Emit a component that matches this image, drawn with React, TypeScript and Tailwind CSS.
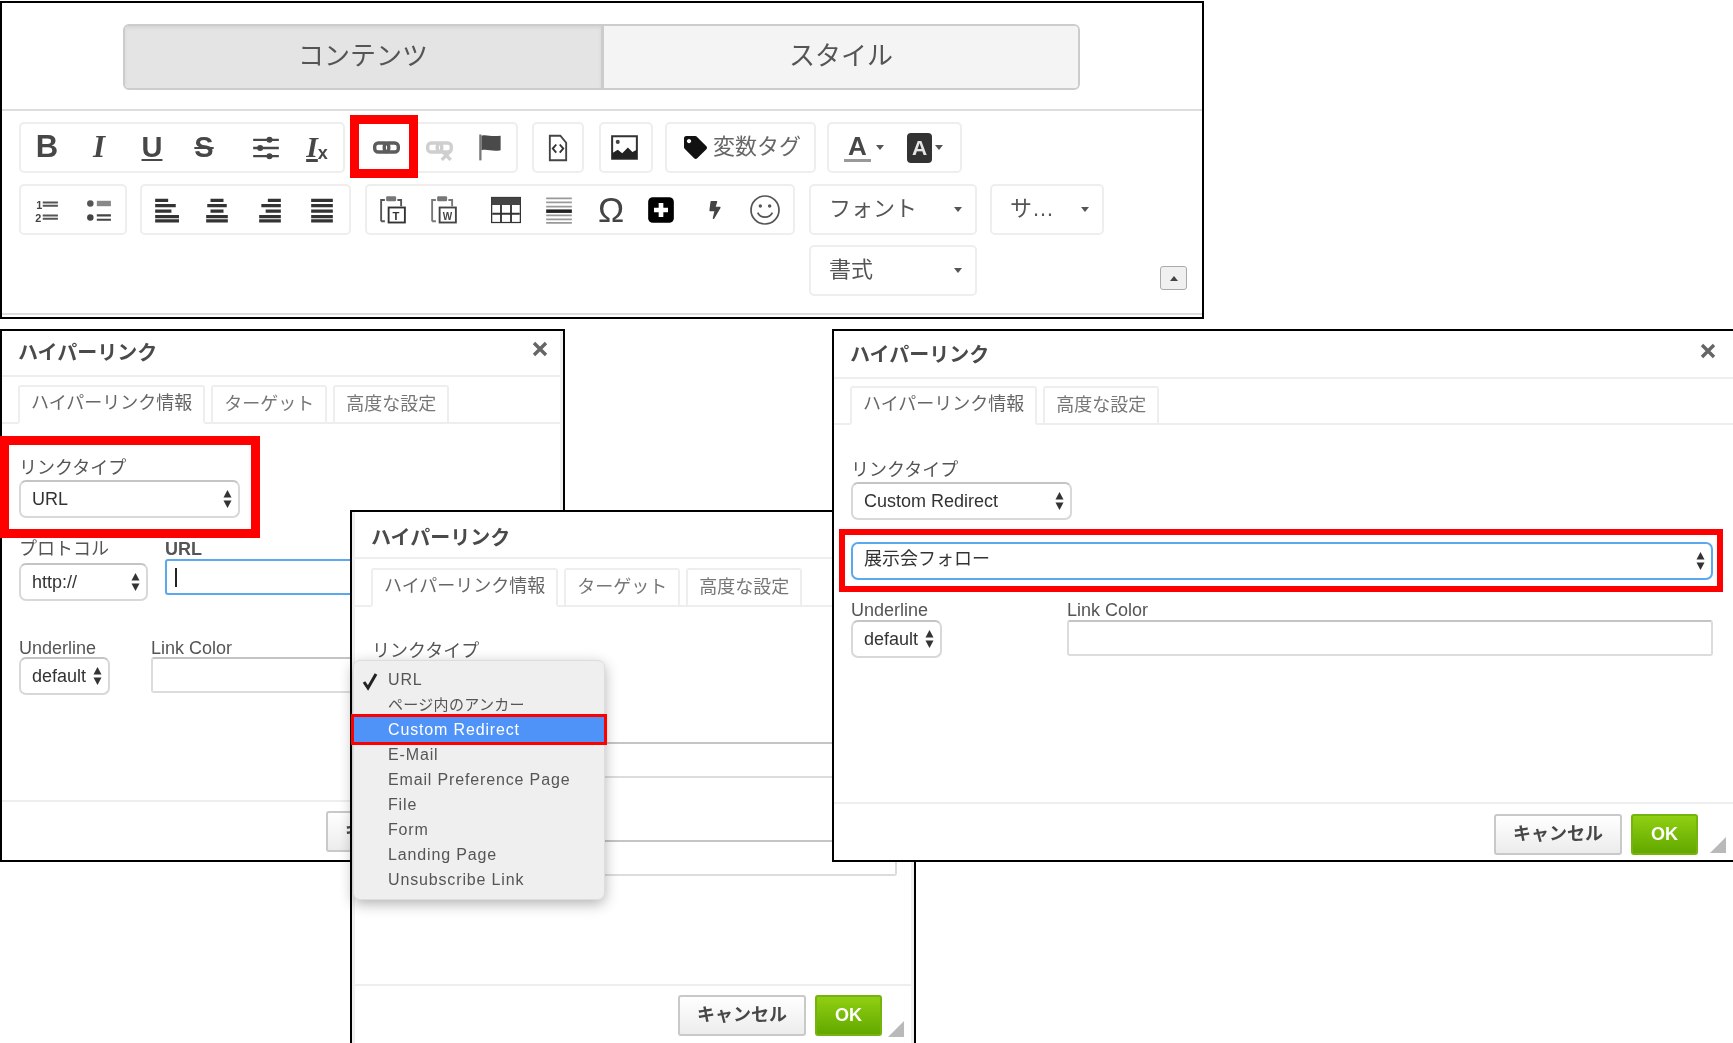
import React from "react";
import { FaTag, FaBolt } from "react-icons/fa";

const Svg = ({ w = 26, h = 26, vb = "0 0 24 24", children }: { w?: number; h?: number; vb?: string; children: React.ReactNode }) => (
  <svg width={w} height={h} viewBox={vb} className="shrink-0">{children}</svg>
);

const Caret = ({ c = "#555" }: { c?: string }) => (
  <svg width="8" height="5" viewBox="0 0 8 5" className="shrink-0"><path d="M0 0h8L4 5z" fill={c} /></svg>
);

const Arrows = () => (
  <svg width="9" height="20" viewBox="0 0 9 20" className="shrink-0">
    <path d="M4.5 1L8.5 8.5H.5z" fill="#333" />
    <path d="M4.5 19L8.5 11.5H.5z" fill="#333" />
  </svg>
);

const Slot = ({ className, children }: { className: string; children: React.ReactNode }) => (
  <div className={`flex items-center justify-center shrink-0 ${className}`}>{children}</div>
);

const Group = ({ className, children }: { className: string; children: React.ReactNode }) => (
  <div className={`flex items-center h-[51px] shrink-0 rounded-[5px] border-2 border-[#eeeeee] bg-white ${className}`}>{children}</div>
);

const Combo = ({ className, label }: { className: string; label: string }) => (
  <div className={`flex items-center justify-between h-[51px] shrink-0 rounded-[5px] border-2 border-[#eeeeee] bg-white pl-[18px] pr-[13px] text-[22px] text-[#555555] ${className}`}>
    <span className="pb-[2px]">{label}</span>
    <Caret />
  </div>
);

const LinkIcon = ({ c }: { c: string }) => (
  <>
    <rect x="1.5" y="8" width="12.5" height="8" rx="3.2" fill="none" stroke={c} strokeWidth="3" />
    <rect x="10" y="8" width="12.5" height="8" rx="3.2" fill="none" stroke={c} strokeWidth="3" />
  </>
);

const Toolbar = () => (
  <div className="absolute left-0 top-[1px] w-[1204px] h-[318px] border-x-[2px] border-y-[2px] border-black bg-white">
    <div className="h-[312px] border-b-2 border-[#dddddd] flex flex-col">
      <div className="ml-[121px] mt-[21px] w-[957px] h-[66px] flex shrink-0 rounded-[6px] border-2 border-[#cccccc] text-[26px] text-[#555555] overflow-hidden">
        <div className="w-[479px] flex items-center justify-center bg-[#e4e4e4] border-r-[3px] border-[#cccccc] shadow-[inset_0_2px_3px_#d5d5d5] pb-[2px]">コンテンツ</div>
        <div className="flex-1 flex items-center justify-center bg-[#f4f4f4] pb-[2px]">スタイル</div>
      </div>
      <div className="mt-[19px] h-[2px] shrink-0 bg-[#dddddd]" />

      <div className="mt-[11px] flex">
        <Group className="ml-[17px] w-[326px]">
          <Slot className="w-[52px] text-[31px] font-bold text-[#474747]">B</Slot>
          <Slot className="w-[52px] text-[31px] font-bold italic text-[#474747] font-['Liberation_Serif',serif]">I</Slot>
          <Slot className="w-[54px] text-[29px] font-bold text-[#474747] underline underline-offset-2">U</Slot>
          <Slot className="w-[50px] text-[29px] font-bold text-[#474747] line-through">S</Slot>
          <Slot className="w-[74px]">
            <Svg w={28} h={28}>
              <g stroke="#474747" strokeWidth="2" fill="#333">
                <path d="M1 5h22M1 12h22M1 19h22" />
                <circle cx="15" cy="5" r="1.6" />
                <circle cx="7" cy="12" r="1.6" />
                <circle cx="15" cy="19" r="1.6" />
              </g>
            </Svg>
          </Slot>
          <Slot className="w-[28px] text-[30px] font-bold italic text-[#474747] font-['Liberation_Serif',serif] pb-[2px]">
            <span className="underline underline-offset-2">I</span>
            <span className="text-[18px] not-italic font-['Liberation_Sans',sans-serif] mt-[14px]">x</span>
          </Slot>
        </Group>
        <Group className="ml-[7px] w-[166px]">
          <Slot className="w-[64px]"><Svg w={27} h={27}><LinkIcon c="#5c5c5c" /></Svg></Slot>
          <Slot className="w-[42px]">
            <Svg w={27} h={27}>
              <LinkIcon c="#cfcfcf" />
              <path d="M14 15l8 8M22 15l-8 8" stroke="#cfcfcf" strokeWidth="3" />
            </Svg>
          </Slot>
          <Slot className="w-[60px]">
            <Svg w={27} h={30}>
              <rect x="2" y="0" width="2" height="23" fill="#777777" />
              <path d="M4 1c5-1.500 8 1.500 17 0v13c-8 1.500-12-1.500-17 0z" fill="#4a4a4a" />
            </Svg>
          </Slot>
        </Group>
        <Group className="ml-[14px] w-[52px] justify-center">
          <Svg w={28} h={34}>
            <path d="M5 1.500h9l5 6v15H5z" fill="none" stroke="#444444" strokeWidth="1.600" />
            <path d="M10.500 9L7.500 12.500l3 3.500M13.500 9l3 3.500-3 3.500" fill="none" stroke="#333333" strokeWidth="1.600" />
          </Svg>
        </Group>
        <Group className="ml-[15px] w-[54px] justify-center pr-[3px]">
          <Svg w={27} h={27}>
            <rect x="1" y="2" width="22" height="20" fill="#ffffff" stroke="#333333" strokeWidth="1.800" />
            <circle cx="6" cy="7" r="1.800" fill="#444444" />
            <path d="M1 22v-5l5-3 4 3 5-5 4 4 4-2v8z" fill="#222222" />
          </Svg>
        </Group>
        <Group className="ml-[12px] w-[151px] pl-[17px] text-[22px] text-[#666666] gap-[6px]">
          <span className="text-[#111111] text-[23px] shrink-0"><FaTag /></span>
          <span className="whitespace-nowrap pb-[2px]">変数タグ</span>
        </Group>
        <Group className="ml-[11px] w-[135px]">
          <div className="ml-[15px] flex items-end gap-[5px]">
            <span className="flex flex-col items-center w-[27px]">
              <span className="text-[26px] leading-[24px] font-bold text-[#474747]">A</span>
              <span className="mt-[1px] w-[27px] h-[3px] bg-[#999999]" />
            </span>
            <span className="mb-[12px]"><Caret /></span>
          </div>
          <div className="ml-[23px] flex items-center gap-[3px]">
            <span className="flex items-center justify-center w-[25px] h-[30px] rounded-[4px] bg-[#333333] text-[21px] font-bold text-[#e5e5e5]">A</span>
            <Caret />
          </div>
        </Group>
      </div>

      <div className="mt-[11px] flex">
        <Group className="ml-[17px] w-[108px]">
          <Slot className="w-[50px]">
            <Svg w={26} h={26}>
              <text x="3" y="11" fontSize="10" fill="#444444" fontWeight="bold">1</text>
              <text x="2" y="23" fontSize="10" fill="#444444" fontWeight="bold">2</text>
              <path d="M9 5h14M9 8h14M9 17h14M9 20h14" stroke="#555555" strokeWidth="1.800" />
            </Svg>
          </Slot>
          <Slot className="w-[56px]">
            <Svg w={26} h={26}>
              <circle cx="4" cy="6" r="3" fill="#555555" />
              <circle cx="4" cy="19" r="3" fill="#444444" />
              <path d="M10 6h13" stroke="#888888" strokeWidth="5" />
              <path d="M10 17h13M10 21h13" stroke="#444444" strokeWidth="2" />
            </Svg>
          </Slot>
        </Group>
        <Group className="ml-[13px] w-[211px]">
          {[
            ["w-[48px]", "M2 3h12M2 8h19M2 13h15M2 18h22M2 22h22"],
            ["w-[54px]", "M6 3h12M3 8h18M6 13h12M2 18h20M2 22h20"],
            ["w-[52px]", "M10 3h12M4 8h18M8 13h14M2 18h20M2 22h20"],
            ["w-[52px]", "M2 3h20M2 8h20M2 13h20M2 18h20M2 22h20"],
          ].map(([w, d]) => (
            <Slot key={d} className={w}>
              <Svg w={26} h={26}><path d={d} stroke="#333333" strokeWidth="3" /></Svg>
            </Slot>
          ))}
        </Group>
        <Group className="ml-[14px] w-[430px]">
          <Slot className="w-[52px]">
            <Svg w={30} h={34} vb="1.500 1 24 24">
              <path d="M4 22V5h3M17 5h3v5M4 22h3" fill="none" stroke="#555555" strokeWidth="1.500" />
              <rect x="8" y="2" width="8" height="4" rx="1" fill="#777777" />
              <rect x="10" y="11" width="13" height="12" fill="#ffffff" stroke="#333333" strokeWidth="1.500" />
              <text x="13" y="21" fontSize="9" fontWeight="bold" fill="#333333">T</text>
            </Svg>
          </Slot>
          <Slot className="w-[50px]">
            <Svg w={30} h={34} vb="1.500 1 24 24">
              <path d="M4 22V5h3M17 5h3v5M4 22h3" fill="none" stroke="#777777" strokeWidth="1.500" />
              <rect x="8" y="2" width="8" height="4" rx="1" fill="#777777" />
              <rect x="10" y="11" width="13" height="12" fill="#ffffff" stroke="#444444" strokeWidth="1.500" />
              <text x="12.500" y="21" fontSize="8" fontWeight="bold" fill="#444444">W</text>
            </Svg>
          </Slot>
          <Slot className="w-[74px]">
            <Svg w={30} h={30}>
              <rect x="0.500" y="2" width="23" height="20" fill="#ffffff" stroke="#333333" strokeWidth="1" />
              <rect x="0.500" y="2" width="23" height="6" fill="#444444" />
              <path d="M8 8v14M16 8v14M1 15h22" stroke="#333333" strokeWidth="1.500" />
            </Svg>
          </Slot>
          <Slot className="w-[32px]">
            <Svg w={28} h={30}>
              <path d="M1 2h22M1 5.500h22M1 9h22M1 16.500h22M1 20h22M1 23h22" stroke="#999999" strokeWidth="1.500" />
              <path d="M1 13h22" stroke="#222222" strokeWidth="3" />
            </Svg>
          </Slot>
          <Slot className="w-[72px] text-[35px] text-[#444444] leading-none">Ω</Slot>
          <Slot className="w-[28px]">
            <Svg w={28} h={28}>
              <rect x="1" y="1" width="22" height="22" rx="4" fill="#000000" />
              <path d="M12 6v12M6 12h12" stroke="#ffffff" strokeWidth="4" />
            </Svg>
          </Slot>
          <Slot className="w-[80px] text-[18px] text-[#444444]"><FaBolt /></Slot>
          <Slot className="w-[20px]">
            <Svg w={32} h={32}>
              <circle cx="12" cy="12" r="10.500" fill="none" stroke="#555555" strokeWidth="1.300" />
              <circle cx="8.500" cy="9" r="1.300" fill="#555555" />
              <circle cx="15.500" cy="9" r="1.300" fill="#555555" />
              <path d="M6.500 14c2 4.500 9 4.500 11 0" fill="none" stroke="#555555" strokeWidth="1.300" />
            </Svg>
          </Slot>
        </Group>
        <Combo className="ml-[14px] w-[168px]" label="フォント" />
        <Combo className="ml-[13px] w-[114px]" label="サ…" />
      </div>

      <div className="mt-[10px] flex items-start">
        <Combo className="ml-[807px] w-[168px]" label="書式" />
        <div className="ml-[183px] mt-[21px] flex items-center justify-center w-[27px] h-[24px] rounded-[3px] border border-[#aaaaaa] bg-[#f0f0f0]">
          <svg width="8" height="5" viewBox="0 0 8 5"><path d="M4 0l4 5H0z" fill="#444444" /></svg>
        </div>
      </div>
    </div>
    <div className="absolute left-[348px] top-[112px] w-[68px] h-[63px] border-[9px] border-[#ff0000]" />
  </div>
);

const Select = ({ className, value }: { className: string; value: string }) => (
  <div className={`flex items-center justify-between h-[38px] shrink-0 rounded-[7px] border-2 border-[#d8d8d8] border-t-[#c4c4c4] bg-white pl-[11px] pr-[6px] text-[18px] text-[#333333] ${className}`}>
    <span className="whitespace-nowrap">{value}</span>
    <Arrows />
  </div>
);

const Input = ({ focus, className = "" }: { focus?: boolean; className?: string }) => (
  <div className={`h-[36px] rounded-[3px] bg-white ${focus ? "border-2 border-[#5aa9ee] flex items-center pl-[8px]" : "border-2 border-[#dcdcdc] border-t-[#c4c4c4]"} ${className}`}>
    {focus && <span className="w-[2px] h-[19px] bg-[#222222]" />}
  </div>
);

const Label = ({ className = "", children }: { className?: string; children?: React.ReactNode }) => (
  <div className={`h-[20px] leading-[20px] text-[18px] text-[#555555] whitespace-nowrap ${className}`}>{children}</div>
);

const Dialog = ({ className, innerClass = "", headerClass, tabsClass, footerClass, tabs, children, overlay, okText = true }: {
  className: string; innerClass?: string; headerClass: string; tabsClass: string; footerClass: string; tabs: string[]; children: React.ReactNode; overlay?: React.ReactNode; okText?: boolean;
}) => (
  <div className={`absolute border-2 border-black bg-white ${className}`}>
    <div className={`h-full flex flex-col border-[#f0f0f0] ${innerClass}`}>
      <div className={`shrink-0 flex items-center pl-[16px] border-b-2 border-[#eeeeee] ${headerClass}`}>
        <span className="text-[20px] font-bold text-[#4a4a4a]">ハイパーリンク</span>
      </div>
      <div className={`shrink-0 h-[39px] pl-[16px] flex gap-[6px] border-b-2 border-[#eeeeee] ${tabsClass}`}>
        {tabs.map((t, i) => (
          <div key={t} className={`px-[11px] pb-[2px] h-[39px] flex items-center justify-center whitespace-nowrap rounded-t-[3px] border-x-2 border-t-2 border-[#eeeeee] text-[18px] ${i === 0 ? "bg-white text-[#666666] border-b-2 border-b-white" : "text-[#777777]"}`}>{t}</div>
        ))}
      </div>
      <div className="flex-1 min-h-0 pl-[17px] pr-[17px]">{children}</div>
      <div className={`relative shrink-0 flex justify-end items-start gap-[9px] border-t-2 border-[#eeeeee] ${footerClass}`}>
        <div className="w-[128px] h-[41px] flex items-center justify-center rounded-[3px] border-2 border-[#c9c9c9] bg-gradient-to-b from-white to-[#ececec] text-[18px] font-bold text-[#474747]">キャンセル</div>
        <div className="w-[67px] h-[41px] flex items-center justify-center rounded-[3px] border-2 border-[#76b30f] bg-gradient-to-b from-[#90cf12] to-[#62a800] text-[18px] font-bold text-white">{okText ? "OK" : ""}</div>
        <svg width="16" height="16" viewBox="0 0 16 16" className="absolute right-[7px] bottom-[7px]"><path d="M16 0v16H0z" fill="#b9b9b9" /></svg>
      </div>
    </div>
    {overlay}
  </div>
);

const Close = ({ className }: { className: string }) => (
  <svg width="16" height="16" viewBox="0 0 16 16" className={`absolute ${className}`}>
    <path d="M2 2l12 12M14 2L2 14" stroke="#666666" strokeWidth="3.400" />
  </svg>
);

const UrlBody = ({ focus, covered }: { focus?: boolean; covered?: boolean }) => (
  <div className="pt-[34px]">
    <Label className="mb-[2px]">リンクタイプ</Label>
    <Select className="w-[221px]" value={covered ? "" : "URL"} />
    <div className="mt-[21px] flex gap-[17px]">
      <div className="shrink-0">
        <Label className="mb-[4px]">{covered ? "" : "プロトコル"}</Label>
        <Select className="w-[129px]" value={covered ? "" : "http://"} />
      </div>
      <div className="flex-1">
        <Label className="font-bold">{covered ? "" : "URL"}</Label>
        <Input focus={focus} />
      </div>
    </div>
    <div className="mt-[37px] flex gap-[41px]">
      <div className="shrink-0">
        <Label className="mb-[-1px]">{covered ? "" : "Underline"}</Label>
        <Select className="w-[91px]" value={covered ? "" : "default"} />
      </div>
      <div className="flex-1">
        <Label className="mb-[-1px]">{covered ? "" : "Link Color"}</Label>
        <Input />
      </div>
    </div>
  </div>
);

const MENU = ["URL", "ページ内のアンカー", "Custom Redirect", "E-Mail", "Email Preference Page", "File", "Form", "Landing Page", "Unsubscribe Link"];

const Menu = () => (
  <div className="absolute left-[1px] top-[148px] w-[252px] h-[240px] pt-[6px] rounded-[7px] bg-[#efefef] border border-[#dddddd] shadow-[0_4px_14px_rgba(0,0,0,0.3)]">
    {MENU.map((m, i) => (
      <div key={m} className={`relative h-[25px] leading-[25px] pl-[34px] whitespace-nowrap ${i === 1 ? "text-[15px] tracking-[0.3px]" : "text-[16px] tracking-[0.85px]"} ${i === 2 ? "bg-[#4f93f8] text-white outline-[3px] outline-solid outline-[#ff0000]" : "text-[#555555]"}`}>
        {i === 0 && (
          <svg width="16" height="19" viewBox="0 0 16 19" className="absolute left-[8px] top-[5px]">
            <path d="M2 10l4 6L14 2" fill="none" stroke="#222222" strokeWidth="3" />
          </svg>
        )}
        {m}
      </div>
    ))}
  </div>
);

export default function App() {
  return (
    <div className="relative w-[1733px] h-[1043px] overflow-hidden bg-white blur-[0.5px] font-['Liberation_Sans','Noto_Sans_CJK_JP',sans-serif]">
      <Toolbar />

      <Dialog
        className="left-0 top-[329px] w-[565px] h-[533px]"
        innerClass="border-r-[3px]"
        headerClass="h-[46px]"
        tabsClass="mt-[8px]"
        footerClass="h-[60px] pt-[9px] pr-[30px]"
        tabs={["ハイパーリンク情報", "ターゲット", "高度な設定"]}
        okText={false}
        overlay={
          <>
            <Close className="left-[530px] top-[10px]" />
            <div className="absolute left-[-2px] top-[105px] w-[260px] h-[102px] border-[9px] border-[#ff0000]" />
          </>
        }
      >
        <UrlBody focus />
      </Dialog>

      <Dialog
        className="left-[350px] top-[510px] w-[566px] h-[536px]"
        innerClass="border-x-[3px]"
        headerClass="h-[47px] pt-[6px]"
        tabsClass="mt-[9px]"
        footerClass="h-[60px] pt-[9px] pr-[29px]"
        tabs={["ハイパーリンク情報", "ターゲット", "高度な設定"]}
        overlay={<Menu />}
      >
        <div className="mr-[-3px]">
          <UrlBody covered />
        </div>
      </Dialog>

      <Dialog
        className="left-[832px] top-[329px] w-[903px] h-[533px]"
        headerClass="h-[48px] pt-[2px]"
        tabsClass="mt-[7px]"
        footerClass="h-[58px] pt-[10px] pr-[35px]"
        tabs={["ハイパーリンク情報", "高度な設定"]}
        overlay={
          <>
            <Close className="left-[866px] top-[12px]" />
            <div className="absolute left-[5px] top-[198px] w-[884px] h-[63px] border-[6px] border-[#ff0000]" />
          </>
        }
      >
        <div className="pt-[35px] pr-[3px]">
          <Label className="mb-[2px]">リンクタイプ</Label>
          <Select className="w-[221px]" value="Custom Redirect" />
          <div className="mt-[22px] h-[38px] flex items-center justify-between rounded-[7px] border-2 border-[#5aa9ee] pl-[11px] pr-[6px] text-[18px] text-[#333333]">
            <span className="pb-[3px]">展示会フォロー</span>
            <Arrows />
          </div>
          <div className="mt-[20px] flex gap-[125px]">
            <div className="shrink-0">
              <Label>Underline</Label>
              <Select className="w-[91px]" value="default" />
            </div>
            <div className="flex-1">
              <Label>Link Color</Label>
              <Input />
            </div>
          </div>
        </div>
      </Dialog>
    </div>
  );
}
